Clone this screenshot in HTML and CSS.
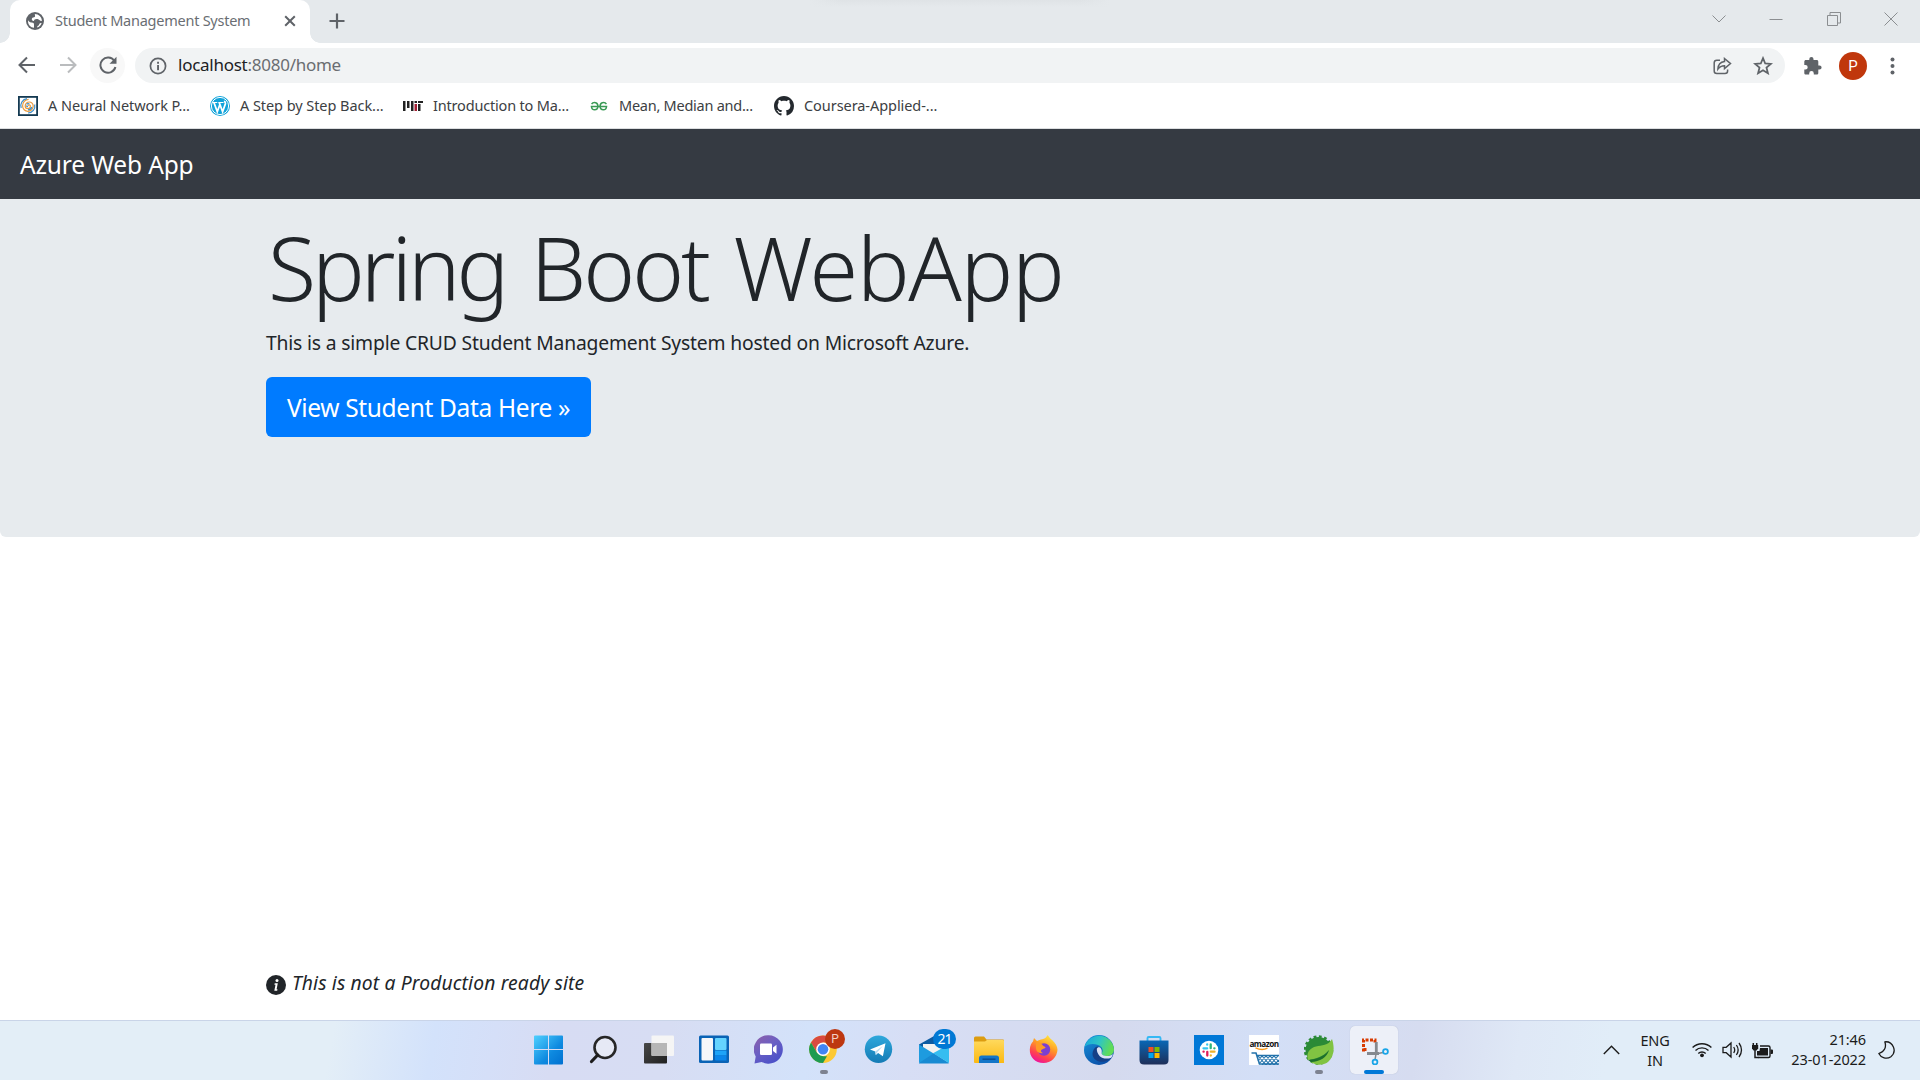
FILE: index.html
```html
<!DOCTYPE html>
<html lang="en">
<head>
<meta charset="utf-8">
<title>Student Management System</title>
<link rel="stylesheet" href="styles.css">
</head>
<body>
<div class="screen">
  <header class="tabstrip">
    <div class="tab">
      <svg class="favicon" width="18" height="18" viewBox="0 0 18 18"><circle cx="9" cy="9" r="9" fill="#5f6368"/><path d="M2 8.2c1.4 2 2.500 2.200 3.700 2.200 1.800 0 2.300.9 2.300 2.100v3.300C4.600 15.600 2 12.800 2 9.300zM8.800 2.100c4 .1 6.900 3 7.100 6.600-1 .5-2 .2-2.500-.6-.6-.9-1.500-1.200-2.700-1.200-1.900 0-2.700.9-2.700 2-1.300.100-2.200-.5-2.200-1.700 0-1.300.900-2 2.300-2 .8 0 1.100-.6.900-1.400zM15.600 11.200c-.8 2.200-2.300 3.700-4.500 4.400.1-1.100.5-1.700 1.400-2 .8-.3.500-1.300.9-1.900.5-.6 1.400-.8 2.200-.5z" fill="#fff"/></svg>
      <span class="tab-title">Student Management System</span>
      <svg class="tab-close" width="12" height="12" viewBox="0 0 12 12"><path d="M1.200 1.200l9.600 9.600M10.800 1.200l-9.600 9.600" stroke="#5f6368" stroke-width="2" fill="none"/></svg>
    </div>
    <svg class="new-tab" width="16" height="16" viewBox="0 0 16 16"><path d="M8 .5v15M.5 8h15" stroke="#5f6368" stroke-width="2.200" fill="none"/></svg>
    <div class="window-controls">
      <svg width="14" height="14" viewBox="0 0 14 14"><path d="M.5 3.500l6.500 6.500 6.500-6.500"/></svg>
      <svg width="14" height="14" viewBox="0 0 14 14"><path d="M.5 7.500h13"/></svg>
      <svg width="14" height="14" viewBox="0 0 14 14"><path d="M.5 3.500h10v10h-10zM3 3V.5h10.500V11h-2.500"/></svg>
      <svg width="14" height="14" viewBox="0 0 14 14"><path d="M.5.5l13 13M13.500.5l-13 13"/></svg>
    </div>
    <div class="top-shadow"></div>
  </header>

  <div class="toolbar">
    <svg class="nav-icon" width="18" height="18" viewBox="0 0 18 18"><path d="M17 9H2M9 1.500L1.500 9 9 16.500" stroke="#5f6368"/></svg>
    <svg class="nav-icon" width="18" height="18" viewBox="0 0 18 18"><path d="M1 9h15M9 1.500L16.500 9 9 16.500" stroke="#babcbe"/></svg>
    <span class="reload"><svg class="nav-icon" width="18" height="18" viewBox="0 0 18 18"><path d="M15.300 4.800A7.600 7.600 0 1 0 16.400 11" stroke="#5f6368"/><path d="M17.500.7v7h-7z" fill="#5f6368"/></svg></span>
    <div class="omnibox">
      <svg width="18" height="18" viewBox="0 0 18 18"><circle cx="9" cy="9" r="7.600" fill="none" stroke="#5f6368" stroke-width="1.700"/><path d="M8.100 8h1.900v5.200H8.100zM8.100 4.800h1.900v1.900H8.100z" fill="#5f6368"/></svg>
      <span class="url"><b>localhost</b>:8080/home</span>
      <svg class="share" width="19" height="18" viewBox="0 0 19 18"><path d="M7 3.200H3.800Q1.200 3.200 1.200 5.800v8.200q0 2.500 2.600 2.500h8.200q2.600 0 2.600-2.500v-1.500"/><path d="M11.500 1.500L17.500 6.600l-6 5V8.700C8.500 8.700 6.500 9.800 4.900 12c.2-4 2.400-7 6.600-7.500z"/></svg>
      <svg class="star" width="20" height="19" viewBox="0 0 20 19"><path d="M10 2.200l2.200 5.300 5.700.4-4.400 3.700 1.400 5.600-4.900-3-4.900 3 1.400-5.600L2.100 7.900l5.700-.4z"/></svg>
    </div>
    <svg class="puzzle" width="18" height="18" viewBox="0 0 18 18"><path d="M15.500 8.400h-1.200V4.700c0-.9-.7-1.600-1.600-1.600H9.500V2.100a2.100 2.100 0 0 0-4.200 0v1H1.900C1 3.100.3 3.800.3 4.700v3.200h1.100a2.300 2.300 0 0 1 0 4.600H.3v3.400c0 .9.7 1.600 1.600 1.600h3.300v-1.100a2.300 2.300 0 0 1 4.600 0v1.100h2.900c.9 0 1.600-.7 1.600-1.600v-3.300h1.200a2.100 2.100 0 0 0 0-4.200z" fill="#5f6368"/></svg>
    <span class="avatar">P</span>
    <svg width="5" height="18" viewBox="0 0 5 18"><g fill="#5f6368"><circle cx="2.500" cy="2.500" r="2"/><circle cx="2.500" cy="9" r="2"/><circle cx="2.500" cy="15.500" r="2"/></g></svg>
  </div>

  <nav class="bookmarks">
    <span class="bookmark b1"><svg width="20" height="20" viewBox="0 0 20 20"><path d="M0 0h20v20H0z" fill="#143a52"/><path d="M1.800 1.800h16.400v16.400H1.800z" fill="#fff"/><g fill="none" stroke-width="1.200"><path d="M10 10a1.200 1.200 0 0 1 2.400 0 2.600 2.600 0 0 1-5.200 0 4 4 0 0 1 8 0 5.300 5.300 0 0 1-10.600 0 6.400 6.400 0 0 1 6-6.700" stroke="#e99a3c"/><path d="M10 10.500a1.200 1.200 0 0 1-1.600-1M16.700 8.500a7 7 0 0 1-6.700 8.500M3.200 12A7 7 0 0 1 9 2.700M8.600 8.300a2.400 2.400 0 0 1 2.800-.3M13.800 11a4 4 0 0 1-3.800 2.800" stroke="#3c8ecb"/></g></svg>A Neural Network P...</span>
    <span class="bookmark b2"><svg width="20" height="20" viewBox="0 0 20 20"><circle cx="10" cy="10" r="10" fill="#10a3da"/><circle cx="10" cy="10" r="8.600" fill="none" stroke="#fff" stroke-width="1"/><path d="M2.300 6.500h5M8.300 6.500h5.200" stroke="#fff" stroke-width="1"/><path d="M4 6.700l3.300 9L9.900 8.500M9.300 6.700l3.300 9 2.800-8c.2-1.300-.9-2-.7-3" fill="none" stroke="#fff" stroke-width="1.800"/></svg>A Step by Step Back...</span>
    <span class="bookmark b3"><svg width="20" height="20" viewBox="0 0 20 20"><path d="M0 5h2.500v10H0zM4 5h2.500v7H4zM8 5h2.500v10H8zM11.500 5H14v2h-2.500zM15 5h5v2h-5zM15 8h2.500v7H15z" fill="#222"/><path d="M11.500 8H14v7h-2.500z" fill="#a31f34"/></svg>Introduction to Ma...</span>
    <span class="bookmark b4"><svg width="18" height="20" viewBox="0 0 20 20"><g fill="none" stroke="#3a9a55" stroke-width="1.700"><path d="M1.800 8C3 5.900 5 6 6.300 6.300 8.400 7 8.800 8.500 8.800 10c0 3-1.400 4.200-3.600 4.200S1.700 13 1.800 10.500M18.200 8c-1.200-2.100-3.200-2-4.500-1.700-2.100.7-2.500 2.200-2.500 3.700 0 3 1.400 4.200 3.600 4.200s3.500-1.200 3.400-3.700M.8 10.500h18.400"/></g></svg>Mean, Median and...</span>
    <span class="bookmark b5"><svg width="20" height="20" viewBox="0 0 16 16"><path fill="#24292e" d="M8 0C3.580 0 0 3.580 0 8c0 3.540 2.290 6.530 5.470 7.590.4.070.55-.17.55-.38 0-.19-.01-.82-.01-1.490-2.010.37-2.530-.49-2.690-.94-.09-.23-.48-.94-.82-1.130-.28-.15-.68-.52-.01-.53.63-.01 1.080.58 1.230.82.72 1.210 1.870.87 2.330.66.070-.52.28-.87.51-1.070-1.780-.2-3.640-.89-3.640-3.950 0-.87.31-1.590.82-2.150-.08-.2-.36-1.020.08-2.120 0 0 .67-.21 2.200.82.64-.18 1.320-.27 2-.27s1.360.09 2 .27c1.530-1.040 2.200-.82 2.200-.82.44 1.100.16 1.920.08 2.120.51.56.82 1.270.82 2.150 0 3.070-1.870 3.750-3.650 3.950.29.25.54.73.54 1.480 0 1.070-.01 1.930-.01 2.200 0 .21.15.46.55.38A8.010 8.010 0 0 0 16 8c0-4.420-3.580-8-8-8z"/></svg>Coursera-Applied-...</span>
  </nav>

  <div class="navbar">Azure Web App</div>
  <main class="page">
    <section class="jumbotron">
      <h1><span class="w1">Spring</span> <span class="w2">Boot</span> <span class="w3">WebApp</span></h1>
      <p>This is a simple CRUD Student Management System hosted on Microsoft Azure.</p>
      <a class="btn">View Student Data Here »</a>
    </section>
    <footer class="note">
      <svg width="20" height="20" viewBox="0 0 20 20"><circle cx="10" cy="10" r="10" fill="#212529"/><circle cx="11" cy="5.500" r="1.500" fill="#fff"/><path d="M8.700 8.300h3.100l-1.200 5.900h.9l-.3 1.500H8.300l1.200-5.900h-1.100z" fill="#fff"/></svg>
      <span>This is not a Production ready site</span>
    </footer>
  </main>

  <div class="taskbar">
    <div class="apps">
      <span class="app"><svg width="30" height="30" viewBox="0 0 30 30"><defs><linearGradient id="win" x1="0" y1="0" x2="1" y2="1"><stop offset="0" stop-color="#4fd0ff"/><stop offset=".6" stop-color="#0e8ae0"/><stop offset="1" stop-color="#0070d0"/></linearGradient></defs><path d="M1 .5h13v13.500H0V1.500q0-1 1-1zM15 .5h13q1 0 1 1V14h-14zM0 15h14v14.500h-13q-1 0-1-1zM15 15h14v13.500q0 1-1 1h-13z" fill="url(#win)"/></svg></span>
      <span class="app"><svg width="30" height="30" viewBox="0 0 30 30"><circle cx="16" cy="12.500" r="10.500" fill="#e6e9f5" stroke="#262626" stroke-width="2.600"/><path d="M8.700 20L2.500 26.500" stroke="#1c1c1c" stroke-width="3.200" stroke-linecap="round"/></svg></span>
      <span class="app"><svg width="30" height="30" viewBox="0 0 30 30"><defs><linearGradient id="tv" x2="1" y2="1"><stop offset="0" stop-color="#484848"/><stop offset="1" stop-color="#202020"/></linearGradient></defs><rect y="8" width="23" height="20.500" rx="1" fill="url(#tv)"/><rect x="7.500" y=".5" width="22.500" height="20.500" rx="1" fill="#f5f5f5"/><path d="M7.500 8H23v13H8.500q-1 0-1-1z" fill="#b6b6b6"/></svg></span>
      <span class="app"><svg width="30" height="30" viewBox="0 0 30 30"><rect y=".5" width="30" height="27.500" rx="1.500" fill="#0a63b5"/><rect x="2.500" y="3" width="11.500" height="22.500" rx="1" fill="#f6f7f9"/><rect x="16" y="3" width="11.500" height="12" rx="1" fill="#65d4ff"/><path d="M16 15.500h11.500v5H16z" fill="#1ea4f8"/><path d="M16 20.500h11.500v5H17q-1 0-1-1z" fill="#0b86ea"/></svg></span>
      <span class="app"><svg width="30" height="30" viewBox="0 0 30 30"><defs><linearGradient id="chat" x1="0" y1="0" x2=".7" y2="1"><stop offset="0" stop-color="#9060a8"/><stop offset=".5" stop-color="#6a5fc4"/><stop offset="1" stop-color="#4a50c8"/></linearGradient></defs><path d="M14.500 .3a14.200 14.200 0 1 1-6.800 26.600L.5 28.500l1.200-7A14.200 14.200 0 0 1 14.500 .3z" fill="url(#chat)"/><rect x="6" y="8.500" width="12" height="11.500" rx="1.300" fill="#fff"/><path d="M19 12.500l3.500-2.700v9l-3.500-2.700z" fill="#fff"/></svg></span>
      <span class="app running"><svg width="30" height="30" viewBox="0 0 30 30"><circle cx="14" cy="14.300" r="13.800" fill="#fcc934"/><path d="M2 7.400A13.800 13.800 0 0 1 26 7.400H14L8 17.500z" fill="#d94a40"/><path d="M2 7.400l6 10.300 6 3.500h4L14 28.100A13.800 13.800 0 0 1 2 7.400z" fill="#1e9b51"/><circle cx="14" cy="14.300" r="6.800" fill="#fff"/><circle cx="14" cy="14.300" r="5.300" fill="#4285f4"/></svg><span class="badge chrome-badge">P</span></span>
      <span class="app"><svg width="30" height="30" viewBox="0 0 30 30"><defs><linearGradient id="tg" x2="0" y2="1"><stop offset="0" stop-color="#2fa8dc"/><stop offset="1" stop-color="#147bb5"/></linearGradient></defs><circle cx="14.500" cy="14.200" r="13.700" fill="url(#tg)"/><path d="M6 14.500L21.500 8.300l-2.600 13-4.800-3.400-2.300 2.200-.500-3.600z" fill="#fff"/><path d="M11.300 16.500l7.700-5.700-5.700 6.500-1.500 2.800z" fill="#b9dcf0"/></svg></span>
      <span class="app"><svg width="30" height="30" viewBox="0 0 30 30"><path d="M0 9.500L16 .5l14 9v9H0z" fill="#0d5ca3"/><path d="M4 9h22v10H4z" fill="#f2f2f2"/><path d="M0 9.500l30 18.500H1q-1 0-1-1z" fill="#1e9bdf"/><path d="M30 9.500v18.500L14 18.300z" fill="#35bdf0"/><path d="M0 28L14.500 18.500 30 28.500H0z" fill="#188ad2"/></svg><span class="badge mail-badge">21</span></span>
      <span class="app"><svg width="30" height="30" viewBox="0 0 30 30"><defs><linearGradient id="fold" x2="0" y2="1"><stop offset="0" stop-color="#ffd95c"/><stop offset="1" stop-color="#fbb913"/></linearGradient></defs><path d="M0 3q0-1.500 1.500-1.500h8.500l2.500 3H29q1 0 1 1V12H0z" fill="#dc9c10"/><path d="M0 6.500h11l2-1.500h16q1 0 1 1v22H1q-1 0-1-1z" fill="url(#fold)"/><path d="M5 28v-5q0-2.500 2.500-2.500h15q2.500 0 2.500 2.500v5z" fill="#1476c8"/><path d="M8.500 24.200h13" stroke="#0a4d94" stroke-width="1.500"/></svg></span>
      <span class="app"><svg width="30" height="30" viewBox="0 0 30 30"><defs><linearGradient id="ff" x1=".8" y1="0" x2=".3" y2="1"><stop offset="0" stop-color="#fff044"/><stop offset=".4" stop-color="#ff9e24"/><stop offset=".75" stop-color="#ff4250"/><stop offset="1" stop-color="#ed0fa0"/></linearGradient></defs><path d="M18 1c0-1 .7-1 1.200-.3 1.300 2.400 3 3.200 4.200 4.600 2.900 3 5.100 6 5.100 9.500A14 14 0 0 1 14.500 28C6 28 .5 22 .8 14.500 1 10.500 2.500 8 4 6.500L5 3l3 3c3-2 8-1 10-5z" fill="url(#ff)"/><circle cx="15" cy="14.500" r="6.200" fill="#7a3fd2"/><path d="M7 8c2.500-1 5 0 6.500 2 1 1.500 3 1.500 3 2.500 0 1.500-4 1-4.500 3.300 0 1.500 1 2 2 2.200-4 1-7-1.500-7-5z" fill="#ff9a26"/></svg></span>
      <span class="app"><svg width="30" height="30" viewBox="0 0 30 30"><defs><linearGradient id="ed" x2="1" y2=".3"><stop offset="0" stop-color="#16a4df"/><stop offset=".55" stop-color="#2fc5c4"/><stop offset="1" stop-color="#60dc56"/></linearGradient><linearGradient id="ed2" x2=".6" y2="1"><stop offset="0" stop-color="#1895dc"/><stop offset="1" stop-color="#0a4fa8"/></linearGradient></defs><circle cx="15" cy="15" r="15" fill="url(#ed2)"/><path d="M.5 12A15 15 0 0 1 30 14.500c0 4.500-3.500 6.500-7 6.500-3.600 0-5.800-1.600-5.300-3 1.300-1.600 1.300-4.300-.8-6.300C13 8 4 8 .5 12z" fill="url(#ed)"/><path d="M13 11.500c-2.500 1-4.500 4-4.500 7.300 0 5.500 5.500 8.700 11 7.900 3.500-.5 6.300-2 8-4.200-5 2-11.500.8-12.500-3.500-.8-2.500.5-4.200 1-5.500 0-1-1.200-2.300-3-2z" fill="#153f86"/><path d="M12.800 14c1-3.500 5.700-1.500 4.900 3.500-.6 1.600 1 3 4.300 3.500 2.500.3 5-.4 7-2-.4 1.500-1 2.700-1.700 3.700-4 1.500-9 1-11.500-1.500-2-2-3-4.500-3-7.200z" fill="#dce2f3"/></svg></span>
      <span class="app"><svg width="30" height="30" viewBox="0 0 30 30"><defs><linearGradient id="st" x2="0" y2="1"><stop offset="0" stop-color="#0967b5"/><stop offset="1" stop-color="#1e2f59"/></linearGradient></defs><path d="M8.500 6V3.200q0-1.200 1.200-1.200h10.600q1.200 0 1.200 1.200V6" fill="none" stroke="#35b8f4" stroke-width="1.900"/><path d="M.5 5.500h29V25q0 4.500-4.500 4.500H5Q.5 29.500.5 25z" fill="url(#st)"/><path d="M9.500 12h5v5h-5z" fill="#f25022"/><path d="M15.500 12h5v5h-5z" fill="#7fba00"/><path d="M9.500 18h5v5h-5z" fill="#00a4ef"/><path d="M15.500 18h5v5h-5z" fill="#ffb900"/></svg></span>
      <span class="app"><svg width="30" height="30" viewBox="0 0 30 30"><path d="M0 0h30v30H0z" fill="#0078d7"/><circle cx="15" cy="15" r="9.300" fill="#fff"/><g fill="none" stroke-width="2.300" stroke-linecap="round"><path d="M9.500 13.300h3.700M13.200 9.500v.2" stroke="#36c5f0"/><path d="M16.700 9.500v3.700M20.300 13.300h.2" stroke="#2eb67d"/><path d="M16.800 16.700h3.700M16.800 20.300v.2" stroke="#ecb22e"/><path d="M13.300 16.800v3.700M9.500 16.700h.2" stroke="#e01e5a"/></g></svg></span>
      <span class="app"><span class="amazon"><span class="amazon-word">amazon</span><svg width="30" height="30" viewBox="0 0 30 30"><path d="M6.500 12.800q6.500 3.200 12 .3" fill="none" stroke="#f79a1c" stroke-width="1.300"/><path d="M2.500 18H7l3.500 11H30M8 20.500h22" fill="none" stroke="#2272ab" stroke-width="1.600"/><path d="M9 21l8 9M13 21l8 9M17 21l8 9M21 21l8 9M25 21l5 6M13 21l-4 5M17 21l-7 8M21 21l-8 9M25 21l-8 9M29 21l-8 9M30 25l-5 5" stroke="#2272ab" stroke-width="1.100"/></svg></span></span>
      <span class="app running"><svg width="30" height="30" viewBox="0 0 30 30"><circle cx="14.500" cy="15" r="13" fill="#2b8a36"/><circle cx="14.500" cy="15" r="13.500" fill="none" stroke="#2b8a36" stroke-width="2.500" stroke-dasharray="2.800 2.500"/><path d="M28 4c3 9 2 18-4 23-5 3.500-13 4-18-1 10-1 15-4 19-11C19 22 11 24 4 25 2 19 5 13 12 11.500 18 10 24 11 28 4z" fill="#80c342"/><path d="M4 25c8-.5 16-3 21-10-2 7.500-9 11.500-18 12z" fill="#1c6f2c"/></svg></span>
      <span class="app active"><svg width="30" height="30" viewBox="0 0 30 30"><path d="M4.500 16.500V5h11.500v4M4.500 14.500h4" fill="none" stroke="#d83b01" stroke-width="3" stroke-dasharray="3 1.500"/><path d="M17.300 7v11.500M8 18.500h12" stroke="#85898f" stroke-width="2.800"/><path d="M17 19l-1 6M19 18.500l5-1" stroke="#85898f" stroke-width="1.500"/><circle cx="16" cy="27" r="2.400" fill="none" stroke="#1aa5e8" stroke-width="1.800"/><circle cx="26.500" cy="16.500" r="2.400" fill="none" stroke="#1aa5e8" stroke-width="1.800"/></svg></span>
    </div>
    <div class="tray">
      <svg class="chev" width="17" height="10" viewBox="0 0 17 10"><path d="M.8 9l7.700-7.700L16.200 9" fill="none" stroke="#1b1b1b" stroke-width="1.400"/></svg>
      <div class="lang">ENG<br>IN</div>
      <svg class="wifi" width="20" height="16" viewBox="0 0 20 16"><g fill="none" stroke="#1b1b1b" stroke-width="1.400"><path d="M.6 5.600a13.300 13.300 0 0 1 18.800 0M3.500 8.600a9.200 9.200 0 0 1 13 0M6.300 11.500a5.200 5.200 0 0 1 7.400 0"/></g><circle cx="10" cy="13.300" r="1.900" fill="#1b1b1b"/></svg>
      <svg class="sound" width="21" height="18" viewBox="0 0 21 18"><g fill="none" stroke="#1b1b1b" stroke-width="1.300"><path d="M1 6.300h3.200L9 2v14l-4.800-4.300H1zM11.700 6q2 3 0 6M14.400 4q3.500 5 0 10M17 2q5 7 0 14"/></g></svg>
      <svg class="battery" width="21" height="17" viewBox="0 0 21 17"><path d="M1.300 1v2.500M4.700 1v2.500M3 8v7.500h4" stroke="#1b1b1b" stroke-width="1.500" fill="none"/><path d="M0 3h6.200v3.500L4.500 8.500h-3L0 6.500z" fill="#1b1b1b"/><path d="M8 4h8.500q1.500 0 1.500 1.500v8.500q0 1.500-1.500 1.500H6.500" fill="none" stroke="#1b1b1b" stroke-width="1.400"/><path d="M8 6h8v7.500H5V9h2.500zM18.500 7.500H20q1 0 1 1V11q0 1-1 1h-1.500z" fill="#1b1b1b"/></svg>
      <div class="clock">21:46<br>23-01-2022</div>
      <svg class="moon" width="17" height="19" viewBox="0 0 17 19"><path d="M6.800.8c1.900 5.500-.3 10-6 11.700A8.300 8.300 0 0 0 12.900 15.700 8.400 8.400 0 0 0 6.800.8z" fill="none" stroke="#1b1b1b" stroke-width="1.300" stroke-linejoin="round"/></svg>
    </div>
  </div>
</div>
</body>
</html>
```
FILE: styles.css
```css
* { box-sizing: border-box; }
body { margin: 0; font-family: "Noto Sans", "Open Sans", sans-serif; font-weight: 370; color: #212529; background: #fff; }
svg { display: block; flex: none; }
.screen { width: 1920px; height: 1080px; display: flex; flex-direction: column; overflow: hidden; }
.screen > * { flex: none; }

/* Browser chrome */
.tabstrip { position: relative; height: 43px; background: #e5e9ec; display: flex; align-items: center; padding-left: 10px; }
.tab { position: relative; width: 300px; height: 43px; background: #fff; border-radius: 10px 10px 0 0; display: flex; align-items: center; padding-left: 16px; }
.tab::before, .tab::after { content: ""; position: absolute; bottom: 0; width: 10px; height: 10px; }
.tab::before { left: -10px; background: radial-gradient(circle at 0 0, #e5e9ec 9.500px, #fff 10px); }
.tab::after { right: -10px; background: radial-gradient(circle at 100% 0, #e5e9ec 9.500px, #fff 10px); }
.favicon { margin-top: -1px; }
.tab-title { margin-left: 11px; width: 219px; font-size: 14.500px; line-height: 20px; letter-spacing: -.25px; color: #6a6e73; margin-top: -3px; white-space: nowrap; }
.tab-close { margin-left: 10px; margin-top: -1px; }
.new-tab { margin: -1px 0 0 19px; }
.window-controls { margin-left: auto; margin-top: -6px; padding-right: 22px; display: flex; gap: 43.300px; }
.window-controls path { fill: none; stroke: #8b8e91; stroke-width: 1; }
.top-shadow { position: absolute; left: 810px; top: 0; width: 300px; height: 7px; background: linear-gradient(90deg, #e5e9ec, rgba(229, 233, 236, 0) 10%, rgba(229, 233, 236, 0) 90%, #e5e9ec), linear-gradient(#dfe3e6, #e5e9ec); }

.toolbar { height: 45px; display: flex; align-items: center; padding-left: 18px; }
.nav-icon { margin-top: -1px; }
.nav-icon path { stroke-width: 2; fill: none; }
.nav-icon path[fill] { fill: #5f6368; }
.nav-icon + .nav-icon { margin-left: 23px; }
.reload { width: 35px; height: 35px; border-radius: 50%; background: #f8f8f8; margin-left: 13px; display: flex; align-items: center; justify-content: center; }
.omnibox { margin-left: 10px; width: 1650px; height: 35px; border-radius: 18px; background: #f1f3f4; display: flex; align-items: center; padding-left: 14px; }
.url { margin-left: 11px; font-size: 17px; line-height: 24px; letter-spacing: -.26px; color: #6a6d71; margin-top: -1px; }
.url b { font-weight: 370; color: #202124; }
.share { margin-left: auto; }
.share path { fill: none; stroke: #5f6368; stroke-width: 1.500; }
.star { margin: 0 12px 0 21px; }
.star path { fill: none; stroke: #5f6368; stroke-width: 1.800; }
.puzzle { margin-left: 19px; }
.avatar { margin: 0 23px 0 17px; width: 28px; height: 28px; border-radius: 50%; background: #c0370c; color: #fff; font: 15px/28px Roboto, sans-serif; text-align: center; }

.bookmarks { height: 41px; border-bottom: 1px solid #dcdee0; display: flex; padding: 7px 0 0 18px; }
.bookmark { display: flex; gap: 10px; height: 21px; align-items: center; font-size: 14.500px; line-height: 21px; letter-spacing: -.06px; color: #3c4043; white-space: nowrap; }
.b1 { width: 192px; }
.b2 { width: 193px; }
.b3 { width: 187px; letter-spacing: -.18px; }
.b4 { width: 184px; gap: 11px; letter-spacing: -.25px; }

/* Page */
.navbar { height: 70px; background: #353a42; color: #fff; font-size: 24.500px; line-height: 72px; letter-spacing: -.15px; padding-left: 20px; }
.page { height: 821px; display: flex; flex-direction: column; }
.jumbotron { height: 338px; background: #e7ebee; border-radius: 0 0 6px 6px; padding: 14px 0 0 266px; }
.jumbotron h1 { margin: 0 0 7px; padding-left: 2px; font-size: 88px; font-weight: 260; line-height: 108px; letter-spacing: -1.900px; word-spacing: 4.500px; }
.jumbotron .w1 { letter-spacing: -4px; }
.jumbotron .w2 { letter-spacing: -3px; }
.jumbotron .w3 { letter-spacing: -1.300px; }
.jumbotron p { margin: 0 0 19px; font-size: 19.300px; line-height: 30px; letter-spacing: -.17px; }
.btn { display: block; width: 325px; height: 60px; border-radius: 6px; background: #007bff; color: #fff; font-size: 24.500px; line-height: 61px; letter-spacing: -.35px; text-align: center; }
.note { margin: auto 0 24px 266px; height: 23px; display: flex; align-items: center; gap: 6px; font-style: italic; font-size: 19.300px; line-height: 22px; letter-spacing: .13px; }
.note span { margin-top: -4px; }

/* Taskbar */
.taskbar { height: 60px; border-top: 1px solid #c9d4e8; display: flex; padding-left: 525px; background: linear-gradient(100deg, #e3eef7 0, #e3eef7 330px, #d3e2fb 430px, #d5dff8 490px, #d7dcf3 550px, #d7ddf3 660px, #d3e2fa 800px, #d7def5 900px, #d5daee 1100px, #d3dff7 1250px, #d6dcf0 1400px, #dfe8f6 1500px, #e1edf8 1590px); }
.apps { display: flex; align-items: center; gap: 7px; height: 58px; }
.app { position: relative; width: 48px; height: 48px; display: flex; align-items: center; justify-content: center; }
.running::after, .active::after { content: ""; position: absolute; bottom: 0; left: 20px; width: 8px; height: 4px; border-radius: 2px; background: #7d8290; }
.active { background: #edf0f8; border-radius: 5px; box-shadow: 0 0 1px #aab3c8; }
.active::after { left: 14px; width: 20px; background: #0078d7; }
.badge { position: absolute; border-radius: 12px; color: #fff; text-align: center; }
.chrome-badge { left: 25px; top: 3px; width: 20px; height: 20px; background: #bd3710; font: 12px/20px Roboto, sans-serif; color: #f3cfc2; }
.mail-badge { left: 23px; top: 3px; width: 23px; height: 20px; background: #0078d4; font-size: 14px; line-height: 20px; letter-spacing: -.9px; }
.amazon { width: 30px; height: 30px; background: #fff; display: grid; }
.amazon > * { grid-area: 1 / 1; }
.amazon-word { font: 700 8.200px/17px "Open Sans", sans-serif; letter-spacing: -.55px; text-align: center; color: #111; }
.tray { margin-left: auto; height: 58px; display: flex; align-items: center; font-size: 14.500px; line-height: 20px; color: #1b1b1b; }
.lang { width: 40px; margin-left: 15px; text-align: center; letter-spacing: -.2px; }
.wifi { margin-left: 17px; }
.sound { margin-left: 10px; }
.battery { margin-left: 9px; }
.clock { width: 80px; margin: -2px 0 0 13px; text-align: right; letter-spacing: -.1px; white-space: nowrap; }
.moon { margin: 0 25px 0 12px; }
```
